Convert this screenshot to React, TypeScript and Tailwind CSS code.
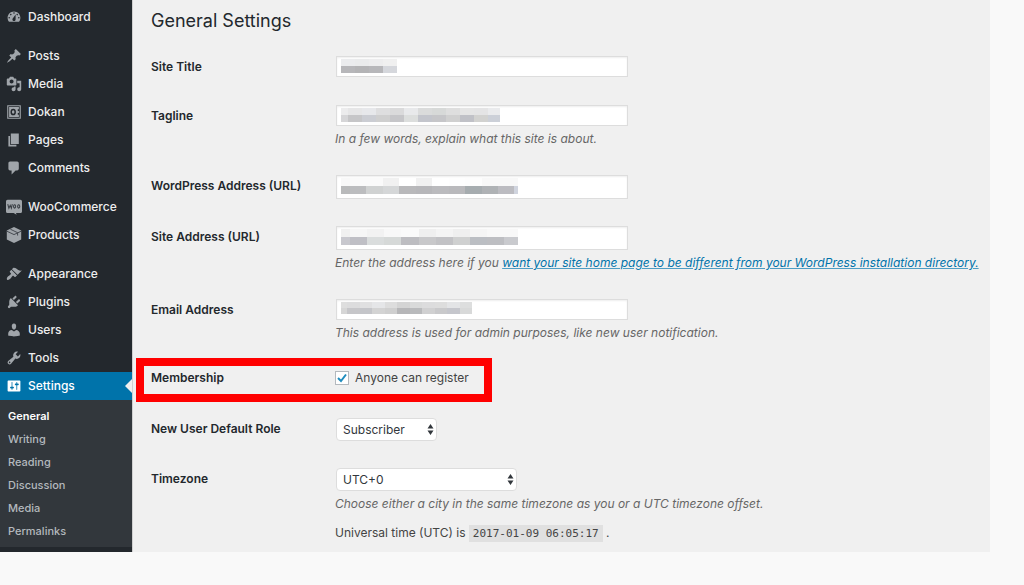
import React, { useState } from 'react';

type MenuItem = { label: string; icon: keyof typeof icons; current?: boolean };

// icon shapes on a 20x20 grid
const icons = {
  dashboard:
    'M3.76 16h12.48c1.1-1.37 1.76-3.11 1.76-5 0-4.42-3.58-8-8-8s-8 3.58-8 8c0 1.89.66 3.63 1.76 5zM10 4c.55 0 1 .45 1 1s-.45 1-1 1-1-.45-1-1 .45-1 1-1zM6 6c.55 0 1 .45 1 1s-.45 1-1 1-1-.45-1-1 .45-1 1-1zm8 0c.55 0 1 .45 1 1s-.45 1-1 1-1-.45-1-1 .45-1 1-1zm-5.37 5.55L12 7v6c0 1.1-.9 2-2 2s-2-.9-2-2c0-.57.24-1.08.63-1.45zM4 10c.55 0 1 .45 1 1s-.45 1-1 1-1-.45-1-1 .45-1 1-1zm12 0c.55 0 1 .45 1 1s-.45 1-1 1-1-.45-1-1 .45-1 1-1z',
  post: 'M10.44 3.02l1.82-1.82 6.36 6.35-1.83 1.82c-1.05-.68-2.48-.57-3.41.36l-.75.75c-.92.93-1.04 2.35-.35 3.41l-1.83 1.82-2.41-2.41-2.8 2.79c-.42.42-3.38 2.71-3.8 2.29s1.86-3.39 2.28-3.81l2.79-2.79L4.1 9.36l1.83-1.82c1.05.69 2.48.57 3.4-.36l.75-.75c.93-.92 1.05-2.35.36-3.41z',
  media:
    'M13 11V4c0-.55-.45-1-1-1h-1.67L9 1H5L3.67 3H2c-.55 0-1 .45-1 1v7c0 .55.45 1 1 1h10c.55 0 1-.45 1-1zM7 4.5c1.38 0 2.5 1.12 2.5 2.5S8.38 9.5 7 9.5 4.5 8.38 4.5 7 5.62 4.5 7 4.5zM14 6h5v10.5c0 1.38-1.12 2.5-2.5 2.5S14 17.88 14 16.5s1.12-2.5 2.5-2.5c.17 0 .34.02.5.05V9h-3V6zm-4 8.05V13h2v3.5c0 1.38-1.12 2.5-2.5 2.5S7 17.88 7 16.5 8.12 14 9.5 14c.17 0 .34.02.5.05z',
  vault:
    'M1.500 1.500h17v17h-17zM2.900 2.900v14.200h14.200V2.900zM3.900 3.900h12.200v2.800h-1.400v2h1.400v2.600h-1.400v2h1.400v2.800H3.900zM9 5.800a3.400 4.200 0 1 0 0 8.400a3.400 4.200 0 1 0 0-8.400zM9 7.800a1.600 2.200 0 1 1 0 4.400a1.600 2.200 0 1 1 0-4.400z',
  page: 'M6 15V2h10v13H6zm-1 1h8v2H3V5h2v11z',
  comments: 'M5 2h9c1.1 0 2 .9 2 2v7c0 1.1-.9 2-2 2h-2l-5 5v-5H5c-1.1 0-2-.9-2-2V4c0-1.1.9-2 2-2z',
  woo: 'M2 1h16c1.1 0 2 .9 2 2v12.5c0 1.1-.9 2-2 2h-5.5l.8 2.3-3.8-2.3H2c-1.1 0-2-.9-2-2V3c0-1.1.9-2 2-2z',
  products: 'M10 0l9 4.500v11L10 20l-9-4.500v-11z',
  appearance:
    'M14.48 11.06L7.41 3.99l1.5-1.5c.5-.56 2.3-.47 3.51.32 1.21.8 1.43 1.28 2.91 2.1 1.18.64 2.45 1.26 4.45.85zm-.71.71L6.7 4.7 4.93 6.47c-.39.39-.39 1.02 0 1.41l1.06 1.06c.39.39.39 1.03 0 1.42-.6.6-1.43 1.11-2.21 1.69-.35.26-.7.53-1.01.84C1.43 14.23.4 16.08 1.4 17.07c.99 1 2.84-.03 4.18-1.36.31-.31.58-.66.85-1.02.57-.78 1.08-1.61 1.69-2.21.39-.39 1.02-.39 1.41 0l1.06 1.06c.39.39 1.02.39 1.41 0z',
  plugins:
    'M13.11 4.36L9.87 7.6 8 5.73l3.24-3.24c.35-.34 1.05-.2 1.56.32.52.51.66 1.21.31 1.55zm-8 1.77l.91-1.12 9.01 9.01-1.19.84c-.71.71-2.63 1.16-3.82 1.16H6.14L4.9 17.26c-.59.59-1.54.59-2.12 0-.59-.58-.59-1.53 0-2.12l1.24-1.24v-3.88c0-1.13.4-3.19 1.09-3.89zm7.26 3.97l3.24-3.24c.34-.35 1.04-.21 1.55.31.52.51.66 1.21.31 1.55l-3.24 3.25z',
  users:
    'M10 9.25c-2.27 0-2.73-3.44-2.73-3.44C7 4.02 7.82 2 9.97 2c2.16 0 2.98 2.02 2.71 3.81 0 0-.41 3.44-2.68 3.44zm0 2.57L12.72 10c2.39 0 4.52 2.33 4.52 4.53v2.49s-3.65 1.13-7.24 1.13c-3.65 0-7.24-1.13-7.24-1.13v-2.49c0-2.25 1.94-4.48 4.47-4.48z',
  tools:
    'M16.68 9.77c-1.34 1.34-3.3 1.67-4.95.99l-5.41 6.52c-.99.99-2.59.99-3.58 0s-.99-2.59 0-3.57l6.52-5.42c-.68-1.65-.35-3.61.99-4.95 1.28-1.28 3.12-1.62 4.72-1.06l-2.89 2.89 2.82 2.82 2.86-2.87c.53 1.58.18 3.39-1.08 4.65zM3.81 16.21c.4.39 1.04.39 1.43 0 .4-.4.4-1.04 0-1.43-.39-.4-1.03-.4-1.43 0-.39.39-.39 1.03 0 1.43z',
  settings:
    'M18 16V4c0-.55-.45-1-1-1H3c-.55 0-1 .45-1 1v12c0 .55.45 1 1 1h14c.55 0 1-.45 1-1zM8 11h1c.55 0 1 .45 1 1s-.45 1-1 1H8v1.5c0 .28-.22.5-.5.5s-.5-.22-.5-.5V13H6c-.55 0-1-.45-1-1s.45-1 1-1h1V5.5c0-.28.22-.5.5-.5s.5.22.5.5V11zm5-2h-1c-.55 0-1-.45-1-1s.45-1 1-1h1V5.5c0-.28.22-.5.5-.5s.5.22.5.5V7h1c.55 0 1 .45 1 1s-.45 1-1 1h-1v5.5c0 .28-.22.5-.5.5s-.5-.22-.5-.5V9z',
};

const menu: MenuItem[][] = [
  [{ label: 'Dashboard', icon: 'dashboard' }],
  [
    { label: 'Posts', icon: 'post' },
    { label: 'Media', icon: 'media' },
    { label: 'Dokan', icon: 'vault' },
    { label: 'Pages', icon: 'page' },
    { label: 'Comments', icon: 'comments' },
  ],
  [
    { label: 'WooCommerce', icon: 'woo' },
    { label: 'Products', icon: 'products' },
  ],
  [
    { label: 'Appearance', icon: 'appearance' },
    { label: 'Plugins', icon: 'plugins' },
    { label: 'Users', icon: 'users' },
    { label: 'Tools', icon: 'tools' },
    { label: 'Settings', icon: 'settings', current: true },
  ],
];

const submenu = ['General', 'Writing', 'Reading', 'Discussion', 'Media', 'Permalinks'];

// hidden values: [width, upper colour, lower colour]
type Block = [number, string, string];

const titleBlocks: Block[] = [
  [14, '#ebecee', '#b7b7ba'],
  [14, '#eaebec', '#b4b4b6'],
  [14, '#ededee', '#b7b7ba'],
  [14, '#f0f0f0', '#d5d7dc'],
];
const taglineBlocks: Block[] = [
  [7, '#ececed', '#d6d6d8'],
  [14, '#e6e6e7', '#c6c6c8'],
  [14, '#e7e8eb', '#cbcdd3'],
  [14, '#dededf', '#cfcfcf'],
  [14, '#dadadb', '#c6c6c9'],
  [14, '#e8e9eb', '#dcdedd'],
  [14, '#dadbdb', '#c3c5cc'],
  [14, '#d7d9d8', '#c6c6c9'],
  [14, '#dedede', '#d0d0d0'],
  [14, '#e5e5e5', '#c0c1c7'],
  [14, '#e4e4e5', '#d2d2d0'],
  [12, '#eaebed', '#ccd0d8'],
];
const wpBlocks: Block[] = [
  [9, '#f8f8f8', '#b9babb'],
  [16, '#fafafa', '#bcbdbf'],
  [17, '#fafafa', '#d0d2d2'],
  [16, '#f1f1f1', '#d5d7d8'],
  [17, '#ffffff', '#b9b9bb'],
  [16, '#f1f1f1', '#b7b7ba'],
  [17, '#ffffff', '#bbbbbe'],
  [16, '#fefefe', '#b9b9bc'],
  [17, '#fdfdfd', '#a6acaf'],
  [16, '#f8f8f8', '#afb2b5'],
  [16, '#f8f8f8', '#bcbcc1'],
  [4, '#f8f8f8', '#d0d4de'],
];
const siteBlocks: Block[] = [
  [9, '#f0f0f0', '#c8c8ce'],
  [17, '#f6f6f6', '#bfbfc5'],
  [17, '#f2f2f2', '#dadddd'],
  [17, '#f8f8f8', '#d6d9d8'],
  [18, '#fafafa', '#bdbdc1'],
  [17, '#efefef', '#c8c8ca'],
  [17, '#f4f4f4', '#c2c2c5'],
  [17, '#efefef', '#cfd0d0'],
  [17, '#f5f5f5', '#bbbec3'],
  [17, '#f8f8f8', '#bdbec2'],
  [14, '#f8f8f8', '#c9cace'],
];
const emailBlocks: Block[] = [
  [6, '#dedede', '#d6d6d6'],
  [13, '#dcdcdd', '#c6c6c9'],
  [12, '#e0e0e1', '#c4c5c9'],
  [13, '#e5e6e8', '#d3d3d3'],
  [12, '#dddddd', '#cfcfcf'],
  [13, '#d4d4d4', '#b6b6b8'],
  [12, '#d9dada', '#b9babc'],
  [13, '#dcdcdd', '#d0d0d1'],
  [12, '#dddddd', '#c9c9cb'],
  [13, '#e3e4e6', '#c5c6cc'],
  [12, '#dddede', '#d8d9d9'],
];

function Mosaic({ blocks, size }: { blocks: Block[]; size: number }) {
  let x = 0;
  return (
    <svg
      className="pointer-events-none absolute left-[5px] top-[3px]"
      width={200}
      height={size * 2}
      shapeRendering="crispEdges"
      aria-hidden="true"
    >
      {blocks.map(([w, upper, lower], i) => {
        const left = x;
        x += w;
        return (
          <g key={i}>
            <rect x={left} y={0} width={w} height={size} fill={upper} />
            <rect x={left} y={size} width={w} height={size} fill={lower} />
          </g>
        );
      })}
    </svg>
  );
}

function MenuIcon({ name }: { name: keyof typeof icons }) {
  return (
    <svg viewBox="0 0 20 20" className="size-4 shrink-0 overflow-visible" fill="currentColor" fillRule="evenodd" aria-hidden="true">
      <path d={icons[name]} />
      {name === 'woo' && (
        <path
          d="M2.2 6.5l1.4 5 1.7-3.6 1.4 3.6 1.2-5M10.7 7.2a1.3 2.1 0 1 0 .1 0zM15.8 7.2a1.3 2.1 0 1 0 .1 0z"
          fill="none"
          stroke="#3a3f45"
          strokeWidth="1.3"
        />
      )}
      {name === 'products' && (
        <path d="M1 5.200l9 4.300 9-4.300M5.500 2.800l9 4.300v3.600" fill="none" stroke="#3a3f45" strokeWidth="1.100" />
      )}
    </svg>
  );
}

function Row({ label, id, children, marked }: { label: string; id: string; children: React.ReactNode; marked?: boolean }) {
  return (
    <div className={`relative flex items-start ${marked ? 'h-[22px]' : ''}`}>
      {marked && (
        <div className="pointer-events-none absolute -inset-y-[11px] -left-[15px] w-[356px] border-8 border-[#ff0000]" />
      )}
      <label
        htmlFor={id}
        className={`w-[184px] shrink-0 text-xs font-semibold text-[#23282d] ${marked ? 'leading-[18px]' : 'leading-[22px]'}`}
      >
        {label}
      </label>
      <div className="min-w-0 flex-1">{children}</div>
    </div>
  );
}

function TextField({ id, blocks, size, tall, type = 'text' }: { id: string; blocks: Block[]; size: number; tall?: boolean; type?: string }) {
  return (
    <div className="relative ml-px w-[292px]">
      <input
        id={id}
        type={type}
        className={`block w-full border border-[#dddddd] bg-white px-2 text-xs text-[#32373c] shadow-[inset_0_1px_2px_rgba(0,0,0,0.07)] outline-none ${tall ? 'h-6' : 'h-[21px]'}`}
      />
      <Mosaic blocks={blocks} size={size} />
    </div>
  );
}

function Select({ id, options, wide }: { id: string; options: string[]; wide?: boolean }) {
  return (
    <div className={`relative ml-px ${wide ? 'w-[181px]' : 'w-[101px]'}`}>
      <select
        id={id}
        className="block h-[23px] w-full appearance-none rounded-[4px] border border-[#dddddd] bg-white pr-5 pl-[6px] text-xs text-[#32373c] outline-none"
      >
        {options.map((o) => (
          <option key={o}>{o}</option>
        ))}
      </select>
      <svg className="pointer-events-none absolute top-[6px] right-[3px]" width="7" height="11" fill="#32373c" aria-hidden="true">
        <path d="M3.5 0L6.5 4.5H.5zM3.5 11L.5 6.5h6z" />
      </svg>
    </div>
  );
}

function Description({ children }: { children: React.ReactNode }) {
  return <p className="mt-1 text-xs leading-[18px] whitespace-nowrap text-[#666666] italic">{children}</p>;
}

export default function App() {
  const [canRegister, setCanRegister] = useState(true);

  return (
    <div className="min-h-screen bg-[#f9f9f9] pr-[34px] font-['Inter',sans-serif]">
      <div className="flex bg-[#f0f0f0]">
        <nav className="w-[132px] shrink-0 bg-[#23282d] pt-[3px] pb-[5px]">
          <ul className="space-y-[11px]">
            {menu.map((group, i) => (
              <li key={i}>
                <ul>
                  {group.map((item) => (
                    <li key={item.label}>
                      <a
                        href="#"
                        className={`relative flex h-7 items-center gap-[6px] pl-[6px] text-xs font-medium ${item.current ? 'bg-[#0073aa] text-white' : 'text-[#eeeeee]'}`}
                      >
                        <span className={item.current ? 'text-white' : 'text-[#a0a5aa]'}>
                          <MenuIcon name={item.icon} />
                        </span>
                        {item.label}
                        {item.current && (
                          <svg className="absolute top-[7px] right-0" width="7" height="14" fill="#f0f0f0" aria-hidden="true">
                            <path d="M7 0v14L0 7z" />
                          </svg>
                        )}
                      </a>
                    </li>
                  ))}
                </ul>
              </li>
            ))}
          </ul>
          <ul className="bg-[#32373c] pt-[5px] pb-1">
            {submenu.map((label, i) => (
              <li key={label}>
                <a
                  href="#"
                  className={`flex h-[23px] items-center pl-2 text-[11px] ${i === 0 ? 'font-semibold text-white' : 'font-medium text-[#b4b9be]'}`}
                >
                  {label}
                </a>
              </li>
            ))}
          </ul>
        </nav>

        <main className="min-w-0 flex-1 border-l border-[#d0d0d0] pt-2 pl-[18px]">
          <h1 className="text-lg leading-[26px] text-[#23282d]">General Settings</h1>

          <form className="mt-[22px] flex flex-col gap-[27px]">
            <Row label="Site Title" id="blogname">
              <TextField id="blogname" blocks={titleBlocks} size={7} />
            </Row>
            <Row label="Tagline" id="blogdescription">
              <TextField id="blogdescription" blocks={taglineBlocks} size={7} />
              <Description>In a few words, explain what this site is about.</Description>
            </Row>
            <Row label="WordPress Address (URL)" id="siteurl">
              <TextField id="siteurl" type="url" blocks={wpBlocks} size={8} tall />
            </Row>
            <Row label="Site Address (URL)" id="home">
              <TextField id="home" type="url" blocks={siteBlocks} size={8} tall />
              <Description>
                Enter the address here if you{' '}
                <a href="#" className="text-[#0073aa] underline decoration-[#4d9dc4]">
                  want your site home page to be different from your WordPress installation directory.
                </a>
              </Description>
            </Row>
            <Row label="Email Address" id="admin_email">
              <TextField id="admin_email" type="email" blocks={emailBlocks} size={6} />
              <Description>This address is used for admin purposes, like new user notification.</Description>
            </Row>
            <Row label="Membership" id="users_can_register" marked>
              <label className="flex h-[18px] items-center gap-[6px] text-xs text-[#444444]">
                <span className="relative block size-[14px]">
                  <input
                    id="users_can_register"
                    type="checkbox"
                    checked={canRegister}
                    onChange={(e) => setCanRegister(e.target.checked)}
                    className="block size-[14px] appearance-none border border-[#b4b9be] bg-white"
                  />
                  {canRegister && (
                    <svg className="pointer-events-none absolute inset-0" width="14" height="14" fill="none" stroke="#1e8cbe" strokeWidth="2" aria-hidden="true">
                      <path d="M3 7l3 3 5-6.500" />
                    </svg>
                  )}
                </span>
                Anyone can register
              </label>
            </Row>
            <Row label="New User Default Role" id="default_role">
              <Select id="default_role" options={['Subscriber', 'Contributor', 'Author', 'Editor', 'Administrator']} />
            </Row>
            <Row label="Timezone" id="timezone_string">
              <Select id="timezone_string" options={['UTC+0', 'UTC+1', 'UTC+2']} wide />
              <Description>Choose either a city in the same timezone as you or a UTC timezone offset.</Description>
              <p className="mt-[11px] text-xs leading-[18px] text-[#444444]">
                Universal time (UTC) is{' '}
                <code className="bg-[#e0e0e0] px-1 py-[2px] font-['DejaVu_Sans_Mono',monospace] text-[11px]">
                  2017-01-09 06:05:17
                </code>{' '}
                .
              </p>
            </Row>
          </form>
        </main>
      </div>
    </div>
  );
}
